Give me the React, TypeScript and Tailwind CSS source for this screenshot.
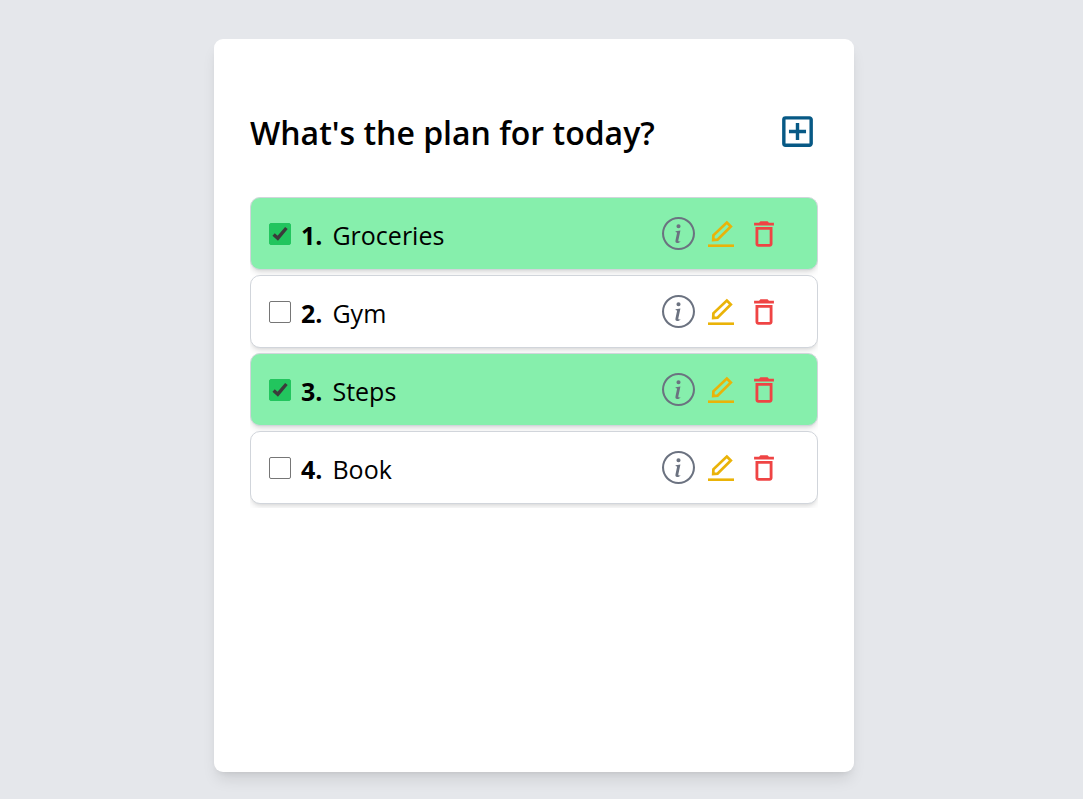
import { useState } from "react";
import { BsInfoCircle } from "react-icons/bs";
import { MdDeleteOutline, MdOutlineAddBox } from "react-icons/md";

type Task = { id: number; title: string; done: boolean };

const initialTasks: Task[] = [
  { id: 1, title: "Groceries", done: true },
  { id: 2, title: "Gym", done: false },
  { id: 3, title: "Steps", done: true },
  { id: 4, title: "Book", done: false },
];

function PencilIcon() {
  return (
    <svg viewBox="0 0 34 34" className="size-[34px]" aria-hidden="true">
      <path
        d="M22.8 5.6 26.8 9.4 13.5 22.6 9.2 23 9.4 18.3Z"
        fill="none"
        stroke="currentColor"
        strokeWidth="2.7"
      />
      <path d="M4 27.4h26v2.6H4z" fill="currentColor" />
    </svg>
  );
}

function TaskRow({ task, onToggle }: { task: Task; onToggle: () => void }) {
  const inputId = `task-${task.id}`;
  return (
    <li
      className={`flex h-[73px] items-center justify-between rounded-[10px] border border-[#d1d5db] pr-9 pl-[18px] shadow-md ${
        task.done ? "bg-[#86efac]" : "bg-white"
      }`}
    >
      <div className="flex items-center gap-[10px]">
        <span className="grid size-[22px]">
          <input
            id={inputId}
            type="checkbox"
            checked={task.done}
            onChange={onToggle}
            className="col-start-1 row-start-1 size-[22px] appearance-none rounded-[2px] border border-[#767676] bg-white checked:border-[#22c55e] checked:bg-[#22c55e]"
          />
          {task.done && (
            <svg
              viewBox="0 0 22 22"
              className="pointer-events-none col-start-1 row-start-1 size-[22px]"
              aria-hidden="true"
            >
              <path
                d="M4.6 11.4 8.8 15.2 17.4 5"
                fill="none"
                stroke="#3b3b3b"
                strokeWidth="3.4"
              />
            </svg>
          )}
        </span>
        <label htmlFor={inputId} className="flex gap-[10px] pt-[2px] text-[25px] leading-9">
          <span className="font-bold">{task.id}.</span>
          <span>{task.title}</span>
        </label>
      </div>
      <div className="flex items-center gap-[9px]">
        <button type="button" aria-label="Details" className="text-[#6b7280]">
          <BsInfoCircle className="size-[33px]" />
        </button>
        <button type="button" aria-label="Edit" className="text-[#eab308]">
          <PencilIcon />
        </button>
        <button type="button" aria-label="Delete" className="text-[#ef4444]">
          <MdDeleteOutline className="size-[34px]" />
        </button>
      </div>
    </li>
  );
}

export default function App() {
  const [tasks, setTasks] = useState(initialTasks);
  const toggle = (id: number) =>
    setTasks((list) => list.map((t) => (t.id === id ? { ...t, done: !t.done } : t)));

  return (
    <div className="flex min-h-screen items-start justify-center bg-[#e5e7eb] pt-[39px] pr-[15px] font-['Open_Sans','Noto_Sans',sans-serif] text-black">
      <main className="min-h-[733px] w-full max-w-[640px] rounded-[9px] bg-white px-9 pt-[70px] pb-9 shadow-lg">
        <header className="flex items-center justify-between">
          <h1 className="pt-1 text-[32px] leading-10 font-semibold">What's the plan for today?</h1>
          <button type="button" aria-label="Add task" className="text-[#075985]">
            <MdOutlineAddBox className="size-[41px]" />
          </button>
        </header>
        <ul className="mt-11 flex flex-col gap-[5px] overflow-hidden pb-1">
          {tasks.map((task) => (
            <TaskRow key={task.id} task={task} onToggle={() => toggle(task.id)} />
          ))}
        </ul>
      </main>
    </div>
  );
}
